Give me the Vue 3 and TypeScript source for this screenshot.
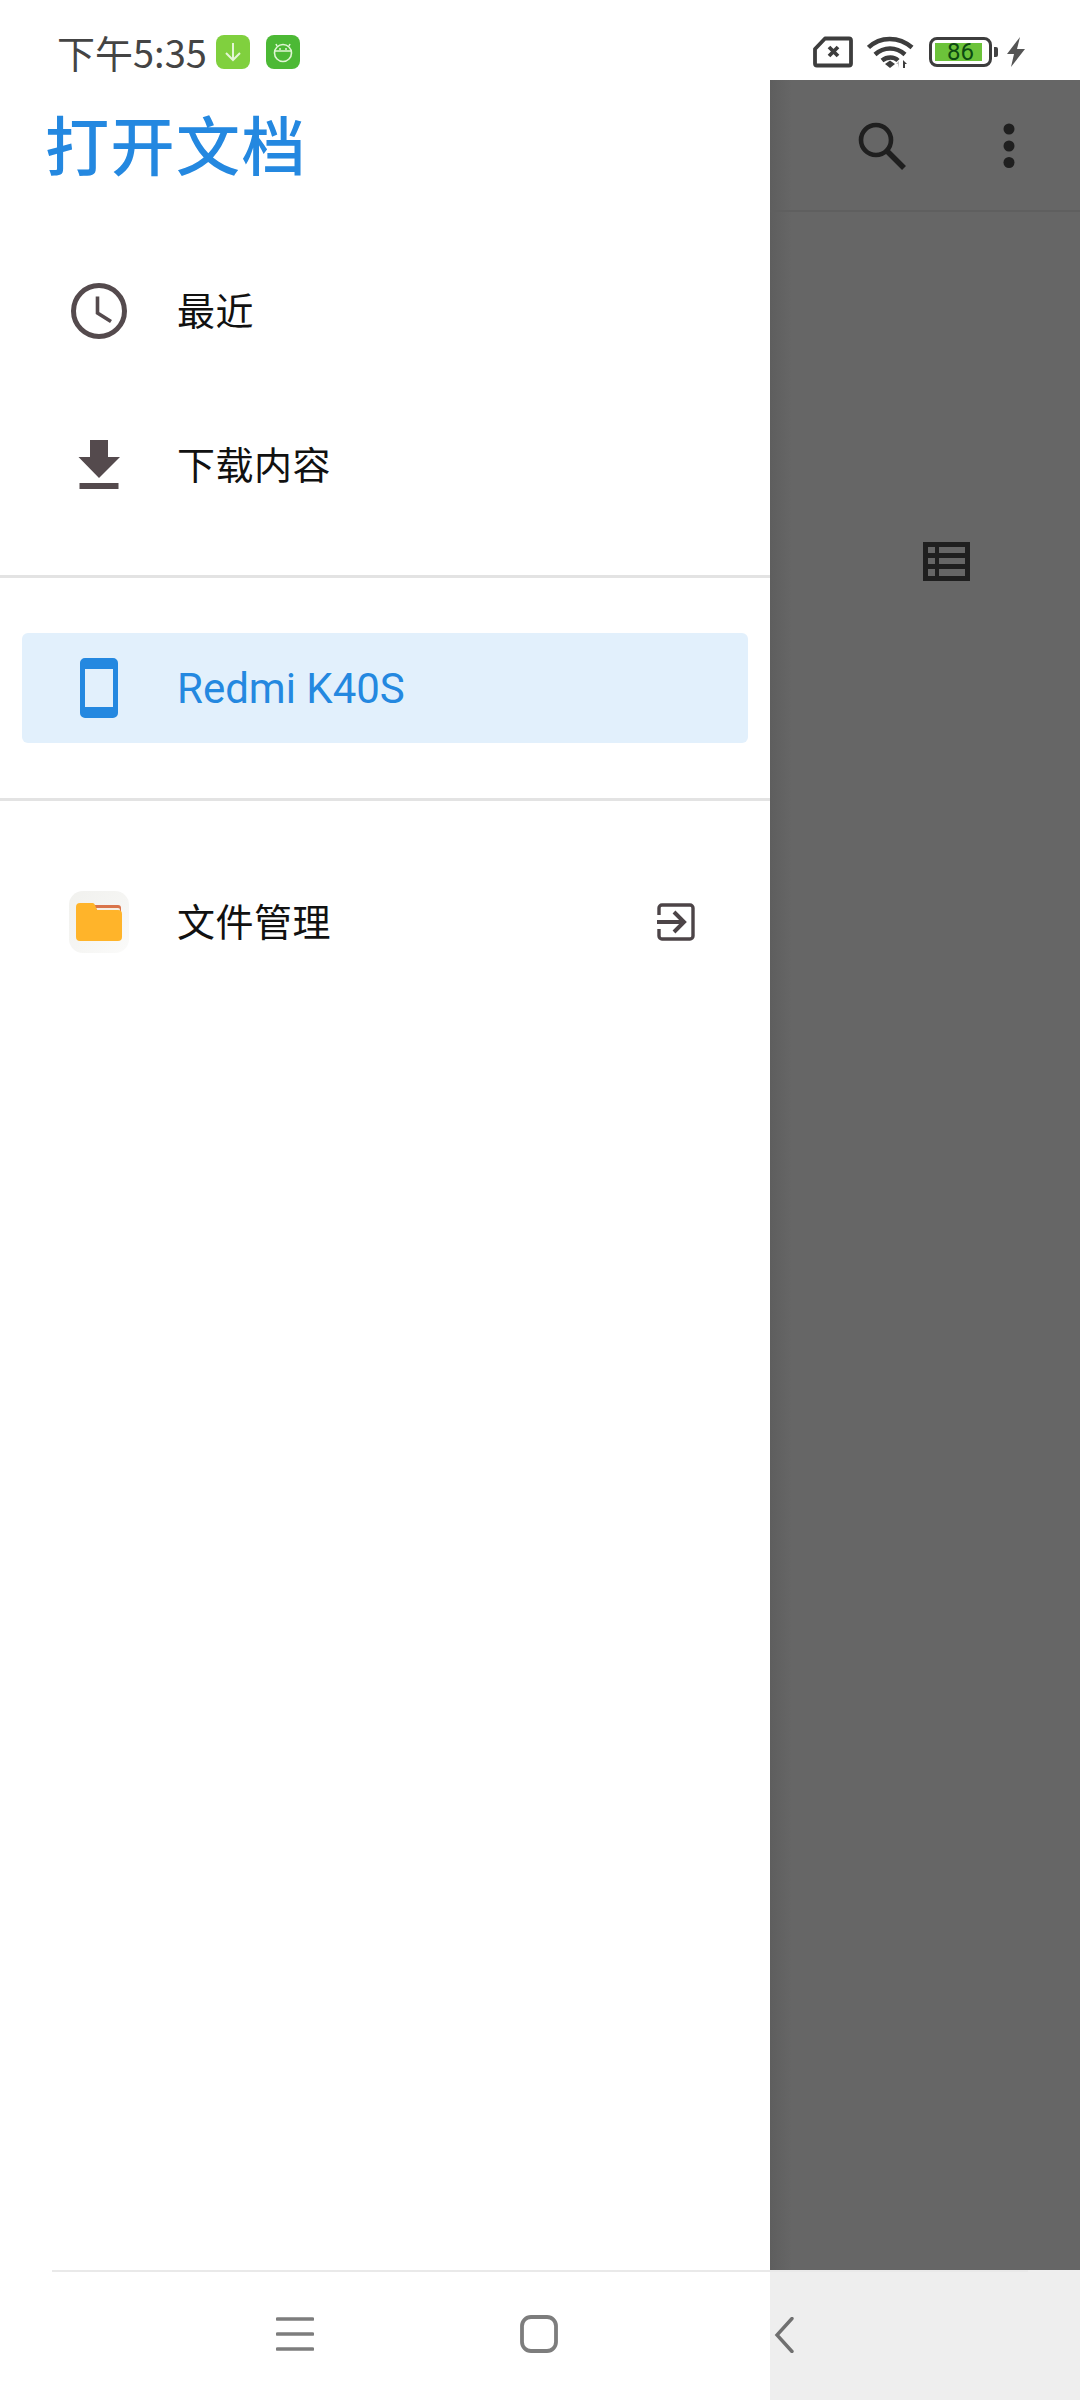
<script setup lang="ts">
const topItems = [
  { label: "最近", icon: "clock" },
  { label: "下载内容", icon: "download" },
];
</script>

<template>
  <div class="screen">
    <header class="status-bar">
      <div class="status-left">
        <span class="time">下午5:35</span>
        <svg class="app-badge" viewBox="0 0 34 34">
          <rect width="34" height="34" rx="8" fill="#80d03e" />
          <path d="M17 8v17M10 18l7 7 7-7" fill="none" stroke="#e4f6d4" stroke-width="2" />
        </svg>
        <svg class="app-badge second" viewBox="0 0 34 34">
          <rect width="34" height="34" rx="8" fill="#4cb935" />
          <circle cx="17" cy="18" r="8.5" fill="none" stroke="#dff5d4" stroke-width="1.6" />
          <path d="M9 16h16M11 11l-1-2M23 11l1-2" fill="none" stroke="#dff5d4" stroke-width="1.6" />
          <circle cx="14" cy="14" r="1" fill="#dff5d4" />
          <circle cx="20" cy="14" r="1" fill="#dff5d4" />
        </svg>
      </div>
      <div class="status-right">
        <svg class="sim" width="40" height="32" viewBox="0 0 40 32">
          <path d="M12 2.500h24a2 2 0 0 1 2 2v23a2 2 0 0 1-2 2H4a2 2 0 0 1-2-2V13z" fill="none" stroke="#3d3d3d" stroke-width="3.800" stroke-linejoin="round" />
          <path d="M16 11l9 9M25 11l-9 9" stroke="#3d3d3d" stroke-width="3.800" />
        </svg>
        <svg class="wifi" width="47" height="34" viewBox="0 0 47 34">
          <path d="M1.500 12.500C13 1 32 1 45 12.500M8 19.500c9-8 21-8 30 0M15 25.500c5-4 12-4 16 0" fill="none" stroke="#3d3d3d" stroke-width="4.500" />
          <path d="M18 29l5-3.500 5 3.500-5 4z" fill="#3d3d3d" />
          <path d="M32 33v-7l-3 3h2" fill="#bdbdbd" />
          <path d="M36 33v-8l4 4h-2v4z" fill="#3d3d3d" />
        </svg>
        <div class="battery">
          <div class="battery-body">
            <span class="battery-level">86</span>
          </div>
          <span class="battery-tip"></span>
        </div>
        <svg class="bolt" width="20" height="30" viewBox="0 0 20 30">
          <path d="M14 0L1 17h7L5 30l14-18h-8z" fill="#555" />
        </svg>
      </div>
    </header>

    <div class="middle">
      <aside class="drawer">
        <h1 class="title">打开文档</h1>

        <ul class="menu">
          <li v-for="item in topItems" :key="item.label" class="row">
            <span class="row-icon">
              <svg v-if="item.icon === 'clock'" width="60" height="60" viewBox="0 0 60 60">
                <circle cx="30" cy="30" r="25.500" fill="none" stroke="#544a4d" stroke-width="5" />
                <path d="M28.500 15.500v16.500l13.500 8.500" fill="none" stroke="#544a4d" stroke-width="3.600" />
              </svg>
              <svg v-else width="60" height="60" viewBox="0 0 60 60">
                <path d="M21 5h18v17h12L30 43 9.500 22H21zM10.500 48h39v6h-39z" fill="#544a4d" />
              </svg>
            </span>
            <span class="row-label">{{ item.label }}</span>
          </li>
        </ul>

        <div class="divider"></div>

        <div class="row device">
          <span class="row-icon">
            <svg width="60" height="60" viewBox="0 0 60 60">
              <path fill-rule="evenodd" d="M16 0h28a5 5 0 0 1 5 5v50a5 5 0 0 1-5 5H16a5 5 0 0 1-5-5V5a5 5 0 0 1 5-5zm0 11v38h28V11z" fill="#2488e0" />
            </svg>
          </span>
          <span class="row-label device-label">Redmi K40S</span>
        </div>

        <div class="divider"></div>

        <div class="row files">
          <span class="row-icon">
            <span class="folder-tile">
              <svg width="46" height="38" viewBox="0 0 46 38">
                <path d="M18 2h24a3 3 0 0 1 3 3v10H18z" fill="#d9744a" />
                <path d="M20 5h22a2 2 0 0 1 2 2v5H24z" fill="#f6efe2" />
                <path d="M4 0h12a3 3 0 0 1 3 2l2 5h21a4 4 0 0 1 4 4v23a4 4 0 0 1-4 4H4a4 4 0 0 1-4-4V4a4 4 0 0 1 4-4z" fill="#ffb42a" />
              </svg>
            </span>
          </span>
          <span class="row-label">文件管理</span>
          <svg class="open-external" width="38" height="38" viewBox="0 0 38 38">
            <path d="M2 12V5a3 3 0 0 1 3-3h28a3 3 0 0 1 3 3v28a3 3 0 0 1-3 3H5a3 3 0 0 1-3-3v-7" fill="none" stroke="#4c4447" stroke-width="3.400" />
            <path d="M0 19h26M17 9l10 10-10 10" fill="none" stroke="#4c4447" stroke-width="4" />
          </svg>
        </div>
      </aside>

      <section class="backdrop">
        <div class="toolbar">
          <svg class="search" width="50" height="50" viewBox="0 0 50 50">
            <circle cx="19" cy="19" r="15" fill="none" stroke="#1f1f1f" stroke-width="4.600" />
            <path d="M30 30l17 17" stroke="#1f1f1f" stroke-width="5.500" />
          </svg>
          <svg class="more" width="12" height="46" viewBox="0 0 12 46">
            <circle cx="6" cy="6" r="5.500" fill="#1f1f1f" />
            <circle cx="6" cy="23" r="5.500" fill="#1f1f1f" />
            <circle cx="6" cy="39.500" r="5.500" fill="#1f1f1f" />
          </svg>
        </div>
        <svg class="list-toggle" width="47" height="39" viewBox="0 0 47 39">
          <path fill-rule="evenodd" d="M0 0h47v39H0zM5 5v6h7V5zm11 0v6h26V5zM5 16v6h7v-6zm11 0v6h26v-6zM5 27v7h7v-7zm11 0v7h26v-7z" fill="#1f1f1f" />
        </svg>
      </section>
    </div>

    <footer class="nav-bar">
      <div class="nav-light">
        <svg class="nav-menu" width="38" height="36" viewBox="0 0 38 36">
          <path d="M1.500 3h35M1.500 18h35M1.500 33h35" stroke="#7d7d7d" stroke-width="3.600" stroke-linecap="round" />
        </svg>
        <svg class="nav-home" width="38" height="38" viewBox="0 0 38 38">
          <rect x="2" y="2" width="34" height="34" rx="9" fill="none" stroke="#7d7d7d" stroke-width="3.800" />
        </svg>
      </div>
      <div class="nav-dark">
        <svg width="20" height="36" viewBox="0 0 20 36">
          <path d="M18 1.500L3 18l15 16.500" fill="none" stroke="#707070" stroke-width="3.400" stroke-linecap="round" />
        </svg>
      </div>
    </footer>
  </div>
</template>

<style scoped>
.screen {
  width: 1080px;
  height: 2400px;
  display: flex;
  flex-direction: column;
  background: #fff;
  overflow: hidden;
  font-family: "Noto Sans CJK SC", "Noto Sans", sans-serif;
}

.status-bar {
  height: 80px;
  flex: none;
  display: flex;
  align-items: center;
  justify-content: space-between;
  padding: 24px 54px 0 57px;
  box-sizing: border-box;
}

.status-left,
.status-right {
  display: flex;
  align-items: center;
}

.time {
  font-size: 38px;
  line-height: 40px;
  color: #444;
  width: 159px;
  white-space: nowrap;
}

.app-badge {
  width: 34px;
  height: 34px;
}

.app-badge.second {
  margin-left: 16px;
}

.wifi {
  margin-left: 14px;
}

.battery {
  margin-left: 15px;
  display: flex;
  align-items: center;
}

.battery-body {
  width: 63px;
  height: 30px;
  box-sizing: border-box;
  border: 3.400px solid #3d3d3d;
  border-radius: 8px;
  padding: 3px;
  display: flex;
}

.battery-level {
  width: 43px;
  height: 18px;
  background: #6cc33a;
  color: #0c4a12;
  font-size: 24px;
  line-height: 18px;
  font-family: "Roboto", sans-serif;
  text-align: center;
  padding-left: 4px;
}

.battery-tip {
  width: 4px;
  height: 10px;
  margin-left: 2px;
  background: #444;
  border-radius: 0 2px 2px 0;
}

.bolt {
  margin-left: 8px;
}

.middle {
  flex: 1;
  display: flex;
  min-height: 0;
}

.drawer {
  width: 770px;
  flex: none;
  background: #fff;
  display: flex;
  flex-direction: column;
}

.title {
  margin: 0;
  height: 154px;
  padding-left: 45px;
  padding-top: 12px;
  box-sizing: border-box;
  font-size: 64px;
  line-height: 100px;
  letter-spacing: 1.500px;
  font-weight: 500;
  color: #2488e0;
}

.menu {
  list-style: none;
  margin: 0;
  padding: 0;
}

.row {
  height: 154px;
  display: flex;
  align-items: center;
  color: #111;
}

.row-icon {
  width: 60px;
  height: 60px;
  margin-left: 69px;
  margin-right: 48px;
  display: flex;
  align-items: center;
  justify-content: center;
  flex: none;
}

.row-label {
  font-size: 38px;
  line-height: 50px;
  letter-spacing: 0.500px;
  font-weight: 400;
  padding-bottom: 5px;
}

.divider {
  height: 3px;
  background: #e3e3e3;
  flex: none;
}

.menu + .divider {
  margin-top: 33px;
}

.device {
  height: 110px;
  margin: 55px 22px 55px;
  background: #e2f0fc;
  border-radius: 6px;
}

.device .row-icon {
  margin-left: 47px;
}

.device-label {
  font-family: "Roboto", sans-serif;
  font-size: 42px;
  letter-spacing: 0;
  font-weight: 400;
  padding-top: 2px;
  padding-bottom: 0;
  color: #2488e0;
}

.files {
  margin-top: 44px;
}

.folder-tile {
  width: 62px;
  height: 62px;
  border-radius: 14px;
  background: linear-gradient(135deg, #f1f1ee, #f6f6f4 60%, #fbfbfa);
  display: flex;
  align-items: center;
  justify-content: center;
}

.open-external {
  margin-left: auto;
  margin-right: 75px;
}

.backdrop {
  flex: 1;
  display: flex;
  flex-direction: column;
  background: linear-gradient(90deg, #5e5e5e, #666 22px);
}

.toolbar {
  height: 132px;
  flex: none;
  display: flex;
  align-items: center;
  box-sizing: border-box;
  padding: 0 0 0 87px;
  border-bottom: 2px solid #5f5f5f;
}

.search {
  margin-top: 2px;
}

.more {
  margin-left: 96px;
  margin-top: 2px;
}

.list-toggle {
  margin: 330px 0 0 153px;
}

.nav-bar {
  height: 130px;
  flex: none;
  display: flex;
  position: relative;
}

.nav-bar::before {
  content: "";
  position: absolute;
  left: 52px;
  right: 52px;
  top: 0;
  height: 2px;
  background: #e9e9e9;
}

.nav-light {
  width: 770px;
  flex: none;
  display: flex;
  align-items: center;
  padding: 0 0 0 276px;
  box-sizing: border-box;
}

.nav-menu {
  margin-top: -2px;
}

.nav-home {
  margin-left: 206px;
  margin-top: -2px;
}

.nav-dark {
  flex: 1;
  background: #eee;
  display: flex;
  align-items: center;
  padding-left: 4px;
}
</style>

<style>
html,
body {
  margin: 0;
  background: #fff;
}
</style>
